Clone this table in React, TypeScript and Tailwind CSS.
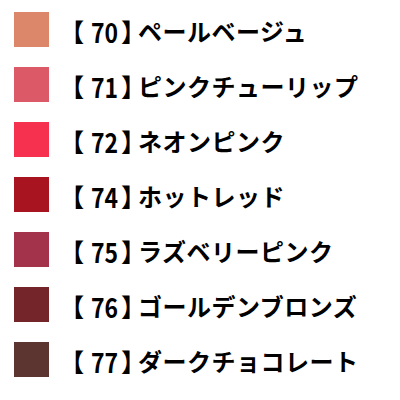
import React from 'react';

const colors = [
  { code: '70', name: 'ペールベージュ', hex: '#dc866a' },
  { code: '71', name: 'ピンクチューリップ', hex: '#dc5a68' },
  { code: '72', name: 'ネオンピンク', hex: '#f6304f' },
  { code: '74', name: 'ホットレッド', hex: '#a8141f' },
  { code: '75', name: 'ラズベリーピンク', hex: '#a2334a' },
  { code: '76', name: 'ゴールデンブロンズ', hex: '#74252a' },
  { code: '77', name: 'ダークチョコレート', hex: '#5c3430' },
];

export default function App() {
  return (
    <div
      className="w-[400px] h-[400px] bg-white pt-[12px] pl-[14px] flex flex-col gap-[20px] overflow-hidden"
      style={{ fontFamily: '"Noto Sans CJK JP", "Noto Sans", sans-serif' }}
    >
      {colors.map(c => (
        <div key={c.code} className="flex items-center h-[35px]">
          <div className="w-[35px] h-[35px] shrink-0" style={{ background: c.hex }} />
          <div className="ml-[22px] pt-[3px] flex items-center text-[24px] font-bold text-black leading-none whitespace-nowrap">
            <span className="text-[25px] [font-feature-settings:'palt']">【</span>
            <span className="inline-block w-[31px] ml-[7px] text-[27px]">
              <span className="inline-block origin-left scale-x-[0.85]">{c.code}</span>
            </span>
            <span className="text-[25px] [font-feature-settings:'palt']">】</span>
            <span className="ml-[4px] tracking-[0.5px]">{c.name}</span>
          </div>
        </div>
      ))}
    </div>
  );
}
